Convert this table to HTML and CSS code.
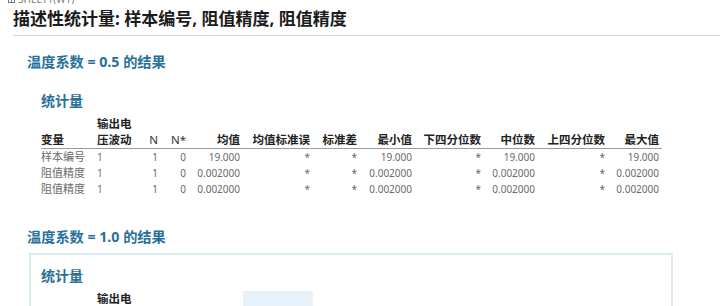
FILE: index.html
```html
<!DOCTYPE html>
<html lang="zh-CN">
<head>
<meta charset="utf-8">
<title>描述性统计量</title>
<link rel="stylesheet" href="styles.css">
</head>
<body>
<div class="crumb">
  <svg class="crumb-icon" width="7" height="8" viewBox="0 0 7 8"><rect x="0.5" y="0.5" width="6" height="7" fill="none" stroke="#777"/><line x1="0.5" y1="4" x2="6.5" y2="4" stroke="#777"/><line x1="3.5" y1="0.5" x2="3.5" y2="7.5" stroke="#777"/></svg>
  <span>SHEET1(W1)</span>
</div>
<h1 class="title">描述性统计量: 样本编号, 阻值精度, 阻值精度</h1>
<main class="results">
  <section class="result">
    <h2 class="result-title">温度系数 = 0.5 的结果</h2>
    <div class="panel">
      <h3 class="panel-title">统计量</h3>
      <table class="stats">
        <colgroup>
          <col class="c56"><col class="c43"><col class="c21"><col class="c28"><col class="c54"><col class="c70"><col class="c47"><col class="c55"><col class="c69"><col class="c54"><col class="c70"><col class="c54">
        </colgroup>
        <thead>
          <tr><th class="left">变量</th><th class="left">输出电压波动</th><th class="latin">N</th><th class="latin">N*</th><th>均值</th><th>均值标准误</th><th>标准差</th><th>最小值</th><th>下四分位数</th><th>中位数</th><th>上四分位数</th><th>最大值</th></tr>
        </thead>
        <tbody>
          <tr><td class="left var">样本编号</td><td class="left">1</td><td>1</td><td>0</td><td>19.000</td><td>*</td><td>*</td><td>19.000</td><td>*</td><td>19.000</td><td>*</td><td>19.000</td></tr>
          <tr><td class="left var">阻值精度</td><td class="left">1</td><td>1</td><td>0</td><td>0.002000</td><td>*</td><td>*</td><td>0.002000</td><td>*</td><td>0.002000</td><td>*</td><td>0.002000</td></tr>
          <tr><td class="left var">阻值精度</td><td class="left">1</td><td>1</td><td>0</td><td>0.002000</td><td>*</td><td>*</td><td>0.002000</td><td>*</td><td>0.002000</td><td>*</td><td>0.002000</td></tr>
        </tbody>
      </table>
    </div>
  </section>
  <section class="result result-next">
    <h2 class="result-title">温度系数 = 1.0 的结果</h2>
    <div class="panel panel-active">
      <h3 class="panel-title">统计量</h3>
      <table class="stats">
        <colgroup>
          <col class="c56"><col class="c43"><col class="c21"><col class="c28"><col class="c54"><col class="c70"><col class="c47"><col class="c55"><col class="c69"><col class="c54"><col class="c70"><col class="c54">
        </colgroup>
        <thead>
          <tr><th class="left">变量</th><th class="left">输出电压波动</th><th class="latin">N</th><th class="latin">N*</th><th>均值</th><th class="hl">均值标准误</th><th>标准差</th><th>最小值</th><th>下四分位数</th><th>中位数</th><th>上四分位数</th><th>最大值</th></tr>
        </thead>
        <tbody>
          <tr><td class="left var">样本编号</td><td class="left">1</td><td>1</td><td>0</td><td>20.000</td><td>*</td><td>*</td><td>20.000</td><td>*</td><td>20.000</td><td>*</td><td>20.000</td></tr>
          <tr><td class="left var">阻值精度</td><td class="left">1</td><td>1</td><td>0</td><td>0.001000</td><td>*</td><td>*</td><td>0.001000</td><td>*</td><td>0.001000</td><td>*</td><td>0.001000</td></tr>
          <tr><td class="left var">阻值精度</td><td class="left">1</td><td>1</td><td>0</td><td>0.001000</td><td>*</td><td>*</td><td>0.001000</td><td>*</td><td>0.001000</td><td>*</td><td>0.001000</td></tr>
        </tbody>
      </table>
    </div>
  </section>
</main>
</body>
</html>
```
FILE: styles.css
```css
html, body {
  overflow: hidden;
}
body {
  margin: 0;
  background: #fff;
  color: #222;
  font-family: "Noto Sans", "Noto Sans CJK SC", sans-serif;
}
.crumb {
  height: 4px;
  overflow: hidden;
  display: flex;
  align-items: flex-end;
  gap: 3px;
  padding-left: 8px;
  font-size: 10px;
  line-height: 10px;
  color: #777;
}
.crumb-icon {
  flex: none;
  margin-bottom: 1px;
}
.title {
  margin: 4px 0 0 13px;
  padding-bottom: 6px;
  border-bottom: 1px solid #d6d6d6;
  font-size: 17px;
  line-height: 21px;
  font-weight: 700;
  color: #1b1b1b;
}
.results {
  padding-left: 27px;
}
.result-next {
  margin-top: 6px;
}
.result-title {
  margin: 16px 0 0;
  font-size: 14.2px;
  line-height: 20px;
  font-weight: 700;
  color: #27709a;
}
.panel {
  box-sizing: border-box;
  width: 644px;
  margin: 6px 0 0 2px;
  padding: 12px 10px;
  border: 2px solid transparent;
}
.panel-active {
  border-color: #dcebee;
}
.panel-title {
  margin: 0 0 6px;
  font-size: 14px;
  line-height: 18px;
  font-weight: 700;
  color: #27709a;
}
.stats {
  width: 621px;
  table-layout: fixed;
  border-collapse: collapse;
}
.c21 { width: 21px; }
.c28 { width: 28px; }
.c43 { width: 43px; }
.c47 { width: 47px; }
.c54 { width: 54px; }
.c55 { width: 55px; }
.c56 { width: 56px; }
.c69 { width: 69px; }
.c70 { width: 70px; }
.stats th {
  padding: 0 3px 0 0;
  font-size: 11.5px;
  line-height: 16px;
  font-weight: 700;
  color: #222;
  text-align: right;
  vertical-align: bottom;
  border-bottom: 1px solid #9a9a9a;
}
.stats th.latin {
  font-weight: 400;
  color: #333;
}
.stats th.hl {
  background: #e7f2fb;
}
.stats td {
  padding: 0 3px 0 0;
  font-size: 10px;
  line-height: 16px;
  color: #6a6a6a;
  text-align: right;
  white-space: nowrap;
}
.stats .left {
  text-align: left;
}
.stats td.var {
  font-size: 11px;
}
```
